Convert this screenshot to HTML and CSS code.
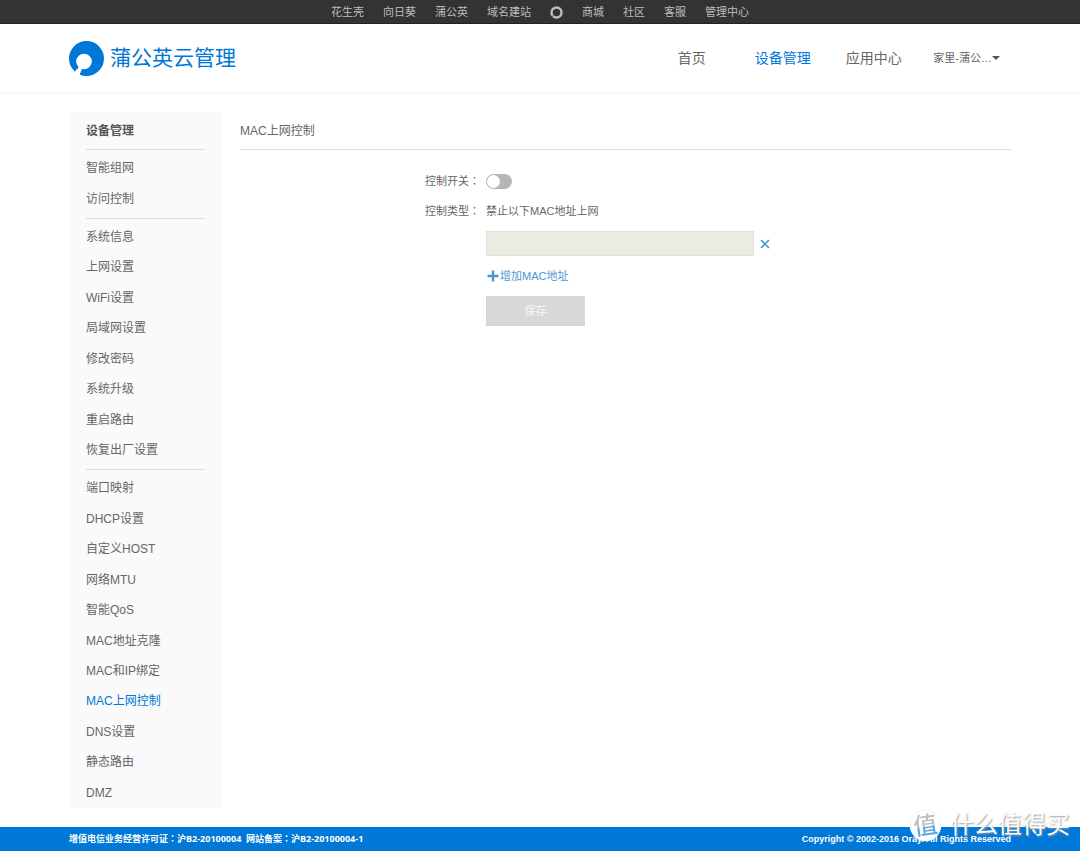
FILE: index.html
```html
<!DOCTYPE html>
<html lang="zh-CN">
<head>
<meta charset="utf-8">
<meta name="viewport" content="width=device-width, initial-scale=1">
<title>蒲公英云管理</title>
<link rel="stylesheet" href="styles.css">
</head>
<body>
<nav class="topbar" aria-label="站点导航">
  <a href="#">花生壳</a>
  <a href="#">向日葵</a>
  <a href="#">蒲公英</a>
  <a href="#">域名建站</a>
  <a href="#" class="ring" aria-label="Oray"><svg viewBox="0 0 13 13" width="13" height="13" aria-hidden="true"><circle cx="6.5" cy="6.5" r="5" fill="none" stroke="#bdbdbd" stroke-width="2.4"/><path d="M3.6 9.2l-1.4 1.6" stroke="#555" stroke-width="1"/></svg></a>
  <a href="#">商城</a>
  <a href="#">社区</a>
  <a href="#">客服</a>
  <a href="#">管理中心</a>
</nav>
<header class="header">
  <div class="container header-row">
    <a class="brand" href="#">
      <svg viewBox="0 0 35 35" width="35" height="35" aria-hidden="true"><circle cx="17.5" cy="17.5" r="17.5" fill="#0078d8"/><circle cx="15" cy="20.5" r="7.8" fill="#fff"/><path d="M9.5 26l-1.2 2.4-1.2-.2-1.5 4.8 4 3 3.6-8.6z" fill="#fff"/></svg>
      <span>蒲公英云管理</span>
    </a>
    <nav class="main-nav" aria-label="主导航">
      <a href="#">首页</a>
      <a href="#" class="active">设备管理</a>
      <a href="#">应用中心</a>
    </nav>
    <button type="button" class="account">家里-蒲公…<svg viewBox="0 0 8 4" width="8" height="4" aria-hidden="true"><path d="M0 0h8l-4 4z" fill="#555"/></svg></button>
  </div>
</header>
<main class="container main">
  <aside class="sidebar">
    <h2>设备管理</h2>
    <ul>
      <li class="rule"></li>
      <li><a href="#">智能组网</a></li>
      <li><a href="#">访问控制</a></li>
      <li class="rule"></li>
      <li><a href="#">系统信息</a></li>
      <li><a href="#">上网设置</a></li>
      <li><a href="#">WiFi设置</a></li>
      <li><a href="#">局域网设置</a></li>
      <li><a href="#">修改密码</a></li>
      <li><a href="#">系统升级</a></li>
      <li><a href="#">重启路由</a></li>
      <li><a href="#">恢复出厂设置</a></li>
      <li class="rule"></li>
      <li><a href="#">端口映射</a></li>
      <li><a href="#">DHCP设置</a></li>
      <li><a href="#">自定义HOST</a></li>
      <li><a href="#">网络MTU</a></li>
      <li><a href="#">智能QoS</a></li>
      <li><a href="#">MAC地址克隆</a></li>
      <li><a href="#">MAC和IP绑定</a></li>
      <li><a href="#" class="active">MAC上网控制</a></li>
      <li><a href="#">DNS设置</a></li>
      <li><a href="#">静态路由</a></li>
      <li><a href="#">DMZ</a></li>
    </ul>
  </aside>
  <section class="content">
    <h1>MAC上网控制</h1>
    <form class="form">
      <label for="control-switch">控制开关<span class="colon" lang="zh-TW">：</span></label>
      <input type="checkbox" role="switch" id="control-switch" class="switch">
      <span>控制类型<span class="colon" lang="zh-TW">：</span></span>
      <span>禁止以下MAC地址上网</span>
      <div class="field mac-row">
        <input type="text" class="mac-input" aria-label="MAC地址" disabled>
        <button type="button" class="remove" aria-label="删除"><svg viewBox="0 0 10 10" width="10" height="10" aria-hidden="true"><path d="M1 1l8 8M9 1l-8 8" stroke="#4a98d3" stroke-width="1.6"/></svg></button>
      </div>
      <button type="button" class="field add"><svg viewBox="0 0 12 12" width="12" height="12" aria-hidden="true"><path d="M6 0.5v11M0.5 6h11" stroke="#4a98d3" stroke-width="2.4"/></svg>增加MAC地址</button>
      <button type="submit" class="field save" disabled>保存</button>
    </form>
  </section>
</main>
<footer class="footer">
  <div class="container footer-row">
    <span class="licence">增值电信业务经营许可证<span class="colon" lang="zh-TW">：</span>沪B2-20100004&nbsp; 网站备案<span class="colon" lang="zh-TW">：</span>沪B2-20100004-1</span>
    <span>Copyright © 2002-2016 Oray. All Rights Reserved</span>
  </div>
  <div class="watermark"><span class="watermark-badge"><span class="watermark-glyph">值</span></span><span>什么值得买</span></div>
</footer>
</body>
</html>
```

FILE: styles.css
```css
* { box-sizing: border-box; }

body {
  margin: 0;
  min-height: 100vh;
  display: flex;
  flex-direction: column;
  background: #fff;
  color: #666;
  font: 12px/20px "Liberation Sans", "Noto Sans CJK SC", sans-serif;
}

a { color: inherit; text-decoration: none; }
a.active { color: #0078d8; }

button {
  padding: 0;
  border: 0;
  background: none;
  color: inherit;
  font: inherit;
  cursor: pointer;
}

svg { display: block; flex: none; }

.colon { font-family: "Noto Sans CJK TC", sans-serif; line-height: 1; }

.container {
  width: 100%;
  max-width: 942px;
  margin: 0 auto;
}

.topbar {
  display: flex;
  justify-content: center;
  align-items: center;
  gap: 19px;
  height: 24px;
  padding-top: 1px;
  background: #333;
  border-bottom: 1px solid #222;
  color: #bdbdbd;
  font-size: 11px;
}

.header { border-bottom: 2px solid #f7f7f7; }

.header-row {
  display: flex;
  align-items: center;
  height: 68px;
  padding-right: 11px;
}

.brand {
  display: flex;
  align-items: center;
  gap: 6px;
  margin-right: auto;
  color: #0078d8;
  font-size: 21px;
}

.main-nav { display: flex; font-size: 14px; }
.main-nav a { width: 91px; text-align: center; }

.account {
  display: flex;
  align-items: center;
  margin-left: 14px;
  font-size: 11px;
}

.main {
  flex: 1;
  display: flex;
  gap: 18px;
  padding: 18px 0 19px;
}

.sidebar {
  display: flex;
  flex-direction: column;
  flex: none;
  width: 153px;
  padding: 0 17px;
  background: #fafafa;
}

.sidebar h2 {
  margin: 0;
  padding-top: 2px;
  font-size: 12px;
  line-height: 35px;
  color: #555;
}

.sidebar ul {
  flex: 1;
  display: flex;
  flex-direction: column;
  margin: 0;
  padding: 0;
  list-style: none;
}

.sidebar li {
  flex: 1 0 auto;
  display: flex;
  align-items: center;
  min-height: 30px;
}

.sidebar .rule {
  flex: none;
  min-height: 0;
  height: 1px;
  margin: 4px 0 3px;
  background: #ddd;
}

.sidebar .rule:first-child { margin-top: 0; }

.content { flex: 1; min-width: 0; }

.content h1 {
  margin: 0;
  padding-top: 2px;
  border-bottom: 1px solid #ddd;
  font-size: 12px;
  font-weight: 400;
  line-height: 35px;
}

.form {
  display: grid;
  grid-template-columns: 55px 268px;
  justify-content: start;
  align-items: center;
  column-gap: 6px;
  row-gap: 10px;
  padding: 21px 0 0 185px;
  font-size: 11px;
}

.form .field { grid-column: 2; }

.switch {
  appearance: none;
  width: 26px;
  height: 15px;
  margin: 0;
  padding: 1px;
  border-radius: 8px;
  background: #b5b5b5;
}

.switch::before {
  content: "";
  display: block;
  width: 13px;
  height: 13px;
  border-radius: 50%;
  background: #fff;
}

.switch:checked { background: #0078d8; }
.switch:checked::before { margin-left: auto; }

.mac-row {
  display: flex;
  align-items: center;
  gap: 6px;
}

.mac-input {
  flex: none;
  width: 100%;
  height: 25px;
  border: 1px solid #e0e0dc;
  background: #ebebe4;
}

.add {
  display: flex;
  align-items: center;
  justify-self: start;
  gap: 1px;
  padding-left: 1px;
  color: #4a98d3;
}

.save {
  width: 99px;
  height: 30px;
  background: #d8d8d8;
  color: #f8f8f8;
}

.footer {
  position: relative;
  background: #0078d8;
  color: #fff;
  font-size: 9px;
  font-weight: 700;
}

.footer-row {
  display: flex;
  justify-content: space-between;
  line-height: 24px;
}

.licence { font-family: "Open Sans", "Noto Sans CJK SC", sans-serif; }

.watermark {
  position: absolute;
  right: 10px;
  bottom: 10px;
  display: flex;
  align-items: center;
  gap: 9px;
  color: #fff;
  font-size: 24px;
  font-weight: 400;
  line-height: 32px;
  text-shadow: 1px 1px 2px #999;
}

.watermark-badge {
  width: 31px;
  height: 31px;
  border-radius: 50%;
  background: #fff;
  box-shadow: 0 0 1px #ddd;
  text-align: center;
  line-height: 31px;
  text-shadow: none;
}

.watermark-glyph {
  display: block;
  background: linear-gradient(#c0c0c0 55%, #5ba6e4 55%);
  background-clip: text;
  color: transparent;
  font-weight: 500;
  transform: rotate(-8deg);
}
```
